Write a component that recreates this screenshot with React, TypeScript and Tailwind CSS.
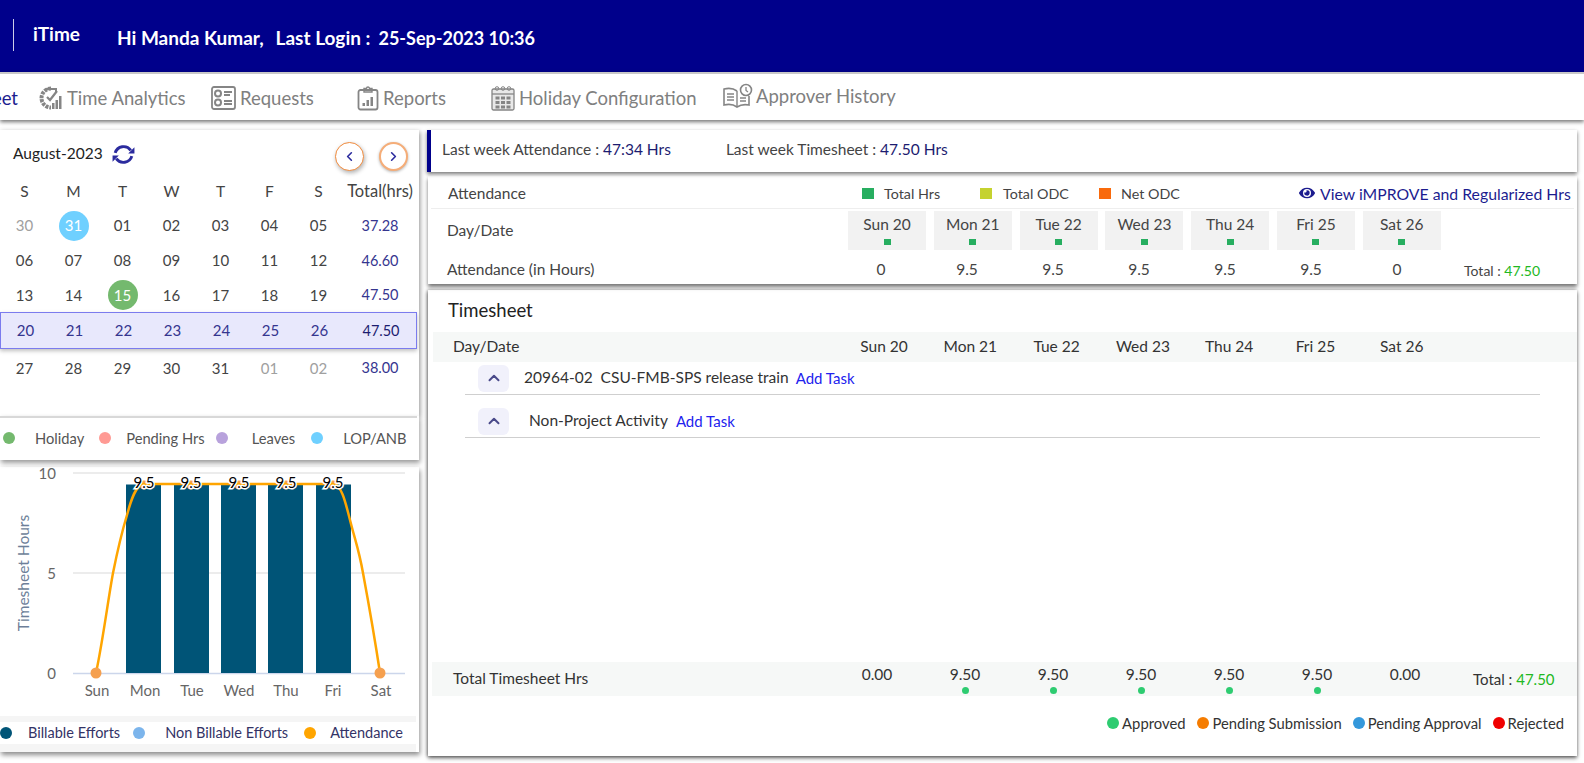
import React from "react";
import { ChevronLeft, ChevronRight, ChevronUp } from "lucide-react";
import { FaEye } from "react-icons/fa";

const days = ["Sun 20", "Mon 21", "Tue 22", "Wed 23", "Thu 24", "Fri 25", "Sat 26"];
const hours = ["0", "9.5", "9.5", "9.5", "9.5", "9.5", "0"];
const totals = ["0.00", "9.50", "9.50", "9.50", "9.50", "9.50", "0.00"];

type Cell = { t: string; muted?: boolean; bg?: string };
const weeks: { cells: Cell[]; total: string; h: string }[] = [
  {
    cells: [
      { t: "30", muted: true },
      { t: "31", bg: "bg-[#6fd0ff]" },
      { t: "01" },
      { t: "02" },
      { t: "03" },
      { t: "04" },
      { t: "05" },
    ],
    total: "37.28",
    h: "h-[35px]",
  },
  {
    cells: ["06", "07", "08", "09", "10", "11", "12"].map((t) => ({ t })),
    total: "46.60",
    h: "h-[35px]",
  },
  {
    cells: [
      { t: "13" },
      { t: "14" },
      { t: "15", bg: "bg-[#74b96e]" },
      { t: "16" },
      { t: "17" },
      { t: "18" },
      { t: "19" },
    ],
    total: "47.50",
    h: "h-[34px]",
  },
];

const calCols = "grid grid-cols-[repeat(7,49px)_74px] items-center text-center";

function NavIcon({ kind }: { kind: string }) {
  const c = "#858585";
  if (kind === "analytics")
    return (
      <svg width="24" height="26" viewBox="0 0 24 26" fill="none">
        <path d="M12 3.500a9.500 9.500 0 1 0 0 19" stroke={c} strokeWidth="4" strokeDasharray="3 1" />
        <path d="M7 4h10v4" stroke={c} strokeWidth="2" />
        <path d="M8 12l3 3 7-9" stroke={c} strokeWidth="2.200" />
        <path d="M13 24v-6h2.500v6zM16.500 24v-9H19v9zM20 24V11h2.500v13z" fill={c} />
      </svg>
    );
  if (kind === "requests")
    return (
      <svg width="25" height="24" viewBox="0 0 25 24" fill="none" stroke={c}>
        <rect x="1" y="1" width="23" height="22" rx="2" strokeWidth="1.800" />
        <circle cx="7" cy="7.500" r="3" strokeWidth="2" />
        <circle cx="7" cy="16.500" r="3" strokeWidth="2" />
        <path d="M13 6h8M13 9h6M13 15h8M13 18h8" strokeWidth="2" />
      </svg>
    );
  if (kind === "reports")
    return (
      <svg width="22" height="26" viewBox="0 0 22 26" fill="none" stroke={c}>
        <rect x="1.500" y="5" width="19" height="19.500" rx="2" strokeWidth="1.800" />
        <path d="M7 5V3.500h2.500a1.500 1.500 0 0 1 3 0H15V7H7z" strokeWidth="1.400" />
        <path d="M5.500 21v-3h2.500v3zM9.500 21v-6H12v6zM13.500 21v-9H16v9z" fill={c} stroke="none" />
      </svg>
    );
  if (kind === "holiday")
    return (
      <svg width="24" height="26" viewBox="0 0 24 26" fill="none" stroke={c}>
        <rect x="1" y="4" width="22" height="21" rx="1.500" fill="#e8e8e8" strokeWidth="1.300" />
        <path d="M1 9h22" strokeWidth="1.300" />
        <circle cx="6" cy="3.500" r="1.800" strokeWidth="1" />
        <circle cx="12" cy="3.500" r="1.800" strokeWidth="1" />
        <circle cx="18" cy="3.500" r="1.800" strokeWidth="1" />
        <path
          d="M4.500 11.500h4v3h-4zM10 11.500h4v3h-4zM15.500 11.500h4v3h-4zM4.500 16h4v3h-4zM10 16h4v3h-4zM15.500 16h4v3h-4zM4.500 20.500h4v3h-4zM10 20.500h4v3h-4zM15.500 20.500h4v3h-4z"
          fill={c}
          stroke="none"
        />
      </svg>
    );
  return (
    <svg width="32" height="26" viewBox="0 0 32 26" fill="none" stroke={c}>
      <path d="M15 8C11 5 6 5 2 6v16c4-1 9-1 13 2 3-2 7-3 12-2V13" strokeWidth="1.600" />
      <path d="M15 8v16" strokeWidth="1.400" />
      <path d="M5 11h7M5 14h7M5 17h7M18 15h6M18 18h6" strokeWidth="1.600" />
      <circle cx="24" cy="7" r="5.500" fill="#fff" strokeWidth="1.600" />
      <path d="M24 4v3.500l2 1.500" strokeWidth="1.300" />
    </svg>
  );
}

function NavItem({ icon, label, cls, gap = "gap-[4px]" }: { icon: string; label: string; cls: string; gap?: string }) {
  return (
    <div className={`flex items-center ${gap} text-[18.500px] text-[#808080] ${cls}`}>
      <NavIcon kind={icon} />
      <span className="translate-y-[1px] whitespace-nowrap">{label}</span>
    </div>
  );
}

function Dot({ cls }: { cls: string }) {
  return <span className={`inline-block h-[12px] w-[12px] shrink-0 rounded-full ${cls}`} />;
}

function RefreshIcon() {
  return (
    <svg width="25" height="25" viewBox="0 0 24 24" fill="none" stroke="#2b2b9e" strokeWidth="2.800">
      <path d="M4 10.500A8.500 8.500 0 0 1 19 8" />
      <path d="M20 13.500A8.500 8.500 0 0 1 5 16" />
      <path d="M21.500 5v6h-6z" fill="#2b2b9e" stroke="none" transform="translate(1 0)" />
      <path d="M2.500 19v-6h6z" fill="#2b2b9e" stroke="none" transform="translate(-1 0)" />
    </svg>
  );
}

function Chart() {
  const bars = [126, 174, 221, 268, 316];
  const labels = [
    ["Sun", 97],
    ["Mon", 145],
    ["Tue", 192],
    ["Wed", 239],
    ["Thu", 286],
    ["Fri", 333],
    ["Sat", 381],
  ] as const;
  const pts = [144, 191, 239, 286, 333];
  return (
    <svg width="419" height="249" viewBox="0 467 419 249" className="block overflow-visible">
      <line x1="73" x2="405" y1="473" y2="473" stroke="#e6e6e6" strokeWidth="1.500" />
      <line x1="73" x2="405" y1="573" y2="573" stroke="#e6e6e6" strokeWidth="1.500" />
      <line x1="73" x2="405" y1="673.500" y2="673.500" stroke="#ccd6eb" strokeWidth="1.500" />
      {bars.map((x) => (
        <rect key={x} x={x} y="484.500" width="35" height="188.500" fill="#005477" />
      ))}
      {pts.map((x) => (
        <circle key={x} cx={x} cy="485" r="4.500" fill="#f5a04f" />
      ))}
      <path
        d="M96 673C103 640 108 600 113 573C118 548 121 535 127 515C131 500 136 484 144 484L333 484C341 484 345 500 350 520C355 540 359 550 363 573C368 600 375 640 380 673"
        fill="none"
        stroke="#ffa500"
        strokeWidth="2.500"
      />
      <circle cx="96" cy="673" r="5.500" fill="#f5a04f" />
      <circle cx="380" cy="673" r="5.500" fill="#f5a04f" />
      {pts.map((x) => (
        <text
          key={x}
          x={x}
          y="488"
          textAnchor="middle"
          fontSize="15"
          fill="#000"
          stroke="#fff"
          strokeWidth="3"
          paintOrder="stroke"
          fontFamily="Lato, sans-serif"
        >
          9.5
        </text>
      ))}
      {[
        ["10", 479],
        ["5", 579],
        ["0", 679],
      ].map(([t, y]) => (
        <text key={t} x="56" y={y} textAnchor="end" fontSize="15" fill="#666" fontFamily="Lato, sans-serif">
          {t}
        </text>
      ))}
      {labels.map(([t, x]) => (
        <text key={t} x={x} y="696" textAnchor="middle" fontSize="15" fill="#666" fontFamily="Lato, sans-serif">
          {t}
        </text>
      ))}
      <text
        x="0"
        y="0"
        transform="translate(29 573) rotate(-90)"
        textAnchor="middle"
        fontSize="15.500"
        fill="#6d7f99"
        fontFamily="Lato, sans-serif"
      >
        Timesheet Hours
      </text>
    </svg>
  );
}

function LeftColumn() {
  return (
    <div className="flex w-[419px] shrink-0 flex-col">
      <div className="h-[286px] bg-white shadow-[1px_2px_5px_rgba(0,0,0,0.45)]">
        <div className="flex h-[46px] items-center pt-[6px]">
          <span className="ml-[13px] -translate-y-[2px] text-[15.500px] text-[#222]">August-2023</span>
          <span className="ml-[8px] -translate-y-[2px]">
            <RefreshIcon />
          </span>
          <button className="ml-[199px] flex h-[29px] w-[29px] items-center justify-center rounded-full border border-[#f08a3c] bg-white shadow-[1px_2px_4px_rgba(0,0,0,0.3)]">
            <ChevronLeft size={15} strokeWidth={2.600} color="#2b2b9e" />
          </button>
          <button className="ml-[15px] flex h-[29px] w-[29px] items-center justify-center rounded-full border-2 border-[#f5ad78] bg-white shadow-[0_1px_3px_rgba(0,0,0,0.3)]">
            <ChevronRight size={15} strokeWidth={2.600} color="#2b2b9e" />
          </button>
        </div>
        <div className={`${calCols} -mt-[1px] h-[33px] text-[15.500px] text-[#444]`}>
          {["S", "M", "T", "W", "T", "F", "S"].map((d, i) => (
            <span key={i}>{d}</span>
          ))}
          <span className="whitespace-nowrap text-[16.500px]">Total(hrs)</span>
        </div>
        {weeks.map((w) => (
          <div key={w.total + w.cells[0].t} className={`${calCols} ${w.h} text-[15px] text-[#444]`}>
            {w.cells.map((c) => (
              <span key={c.t} className="flex justify-center">
                <span
                  className={`flex h-[30px] w-[30px] items-center justify-center rounded-full ${
                    c.bg ? `${c.bg} text-white` : c.muted ? "text-[#a0a0a0]" : ""
                  }`}
                >
                  {c.t}
                </span>
              </span>
            ))}
            <span className="text-[14.500px] text-[#35358f]">{w.total}</span>
          </div>
        ))}
        <div
          className={`${calCols} h-[37px] w-[417px] border border-[#7b7bee] bg-[#e8e8fc] text-[15px] text-[#35358f] shadow-[0_2px_4px_rgba(0,0,0,0.25)]`}
        >
          {["20", "21", "22", "23", "24", "25", "26"].map((t) => (
            <span key={t}>{t}</span>
          ))}
          <span className="text-[14.500px] text-[#1c1c70]">47.50</span>
        </div>
        <div className={`${calCols} h-[38px] text-[15px] text-[#444]`}>
          {["27", "28", "29", "30", "31"].map((t) => (
            <span key={t}>{t}</span>
          ))}
          <span className="text-[#a0a0a0]">01</span>
          <span className="text-[#a0a0a0]">02</span>
          <span className="text-[14.500px] text-[#35358f]">38.00</span>
        </div>
      </div>

      <div className="relative flex h-[44px] items-center bg-white text-[14.700px] text-[#555] shadow-[1px_3px_5px_rgba(0,0,0,0.4)] before:absolute before:left-0 before:top-0 before:h-[2px] before:w-[417px] before:bg-[#d8d8d8]">
        <Dot cls="ml-[3px] bg-[#74b96e]" />
        <span className="ml-[20px]">Holiday</span>
        <Dot cls="ml-[15px] bg-[#ff9a94]" />
        <span className="ml-[15px]">Pending Hrs</span>
        <Dot cls="ml-[11px] bg-[#b8a2dc]" />
        <span className="ml-[24px]">Leaves</span>
        <Dot cls="ml-[16px] bg-[#6fd0ff]" />
        <span className="ml-[20px]">LOP/ANB</span>
      </div>

      <div className="mt-[7px] h-[285px] bg-white shadow-[1px_3px_5px_rgba(0,0,0,0.45)]">
        <Chart />
        <div className="h-[36px] w-[416px] bg-[#f5f5f5] py-[6px]">
          <div className="flex h-[22px] items-center bg-white text-[14.500px] text-[#333366]">
            <Dot cls="bg-[#005477]" />
            <span className="ml-[16px] whitespace-nowrap">Billable Efforts</span>
            <Dot cls="ml-[13px] bg-[#7cb5ec]" />
            <span className="ml-[20px] whitespace-nowrap">Non Billable Efforts</span>
            <Dot cls="ml-[16px] bg-[#ffa500]" />
            <span className="ml-[14px]">Attendance</span>
          </div>
        </div>
      </div>
    </div>
  );
}

function RightColumn() {
  return (
    <div className="ml-[8px] flex w-[1150px] shrink-0 flex-col">
      <div className="relative z-[3] flex h-[42px] items-center border-l-[4px] border-[#00008b] bg-white pl-[11px] text-[15.500px] text-[#444] shadow-[0_2px_4px_rgba(0,0,0,0.55)]">
        <span className="-translate-y-[1px]">
          Last week Attendance : <span className="text-[#1c1c70]">47:34 Hrs</span>
        </span>
        <span className="ml-[55px] -translate-y-[1px]">
          Last week Timesheet : <span className="text-[#1c1c70]">47.50 Hrs</span>
        </span>
      </div>

      <div className="relative z-[2] ml-[1px] mt-[4px] h-[108px] bg-white text-[15.500px] text-[#444] shadow-[0_3px_4px_rgba(0,0,0,0.55)]">
        <div className="mx-[3px] flex h-[33px] items-center border-b border-[#eeeeee] pl-[17px] pt-[3px]">
          <span className="w-[414px]">Attendance</span>
          <span className="h-[11px] w-[12px] bg-[#27ae60]" />
          <span className="ml-[10px] w-[96px] text-[14.300px]">Total Hrs</span>
          <span className="h-[11px] w-[12px] bg-[#c5d22f]" />
          <span className="ml-[11px] w-[96px] text-[14.300px]">Total ODC</span>
          <span className="h-[11px] w-[12px] bg-[#f96a0c]" />
          <span className="ml-[10px] w-[178px] text-[14.300px]">Net ODC</span>
          <FaEye size={16} color="#1c1c8f" className="-translate-y-[1px]" />
          <span className="ml-[5px] whitespace-nowrap text-[15.800px] text-[#1c1c8f]">
            View iMPROVE and Regularized Hrs
          </span>
        </div>
        <div className="flex h-[43px] items-center pl-[19px]">
          <span className="w-[401px]">Day/Date</span>
          <div className="grid grid-cols-[repeat(7,78px)] gap-x-[7.800px]">
            {days.map((d) => (
              <div key={d} className="flex h-[39px] flex-col items-center bg-[#f2f2f2] pt-[2px]">
                <span>{d}</span>
                <span className="mt-[3px] h-[6px] w-[7px] bg-[#27ae60]" />
              </div>
            ))}
          </div>
        </div>
        <div className="flex h-[32px] items-center pl-[19px] pt-[4px]">
          <span className="w-[414px] whitespace-nowrap">Attendance (in Hours)</span>
          <div className="grid grid-cols-[repeat(7,40px)] gap-x-[46px] text-center">
            {hours.map((h, i) => (
              <span key={i}>{h}</span>
            ))}
          </div>
          <span className="ml-[47px] whitespace-nowrap text-[14px]">
            Total : <span className="text-[#22b822]">47.50</span>
          </span>
        </div>
      </div>

      <div className="relative z-[1] ml-[1px] mt-[6px] flex h-[466px] flex-col bg-white text-[15.500px] text-[#333] shadow-[0_2px_4px_rgba(0,0,0,0.6),-1px_0_3px_rgba(0,0,0,0.3)]">
        <div className="flex h-[42px] items-center pl-[20px] text-[18.500px] text-[#222]">Timesheet</div>
        <div className="ml-[5px] flex h-[30px] items-center bg-[#f6f8f7] pl-[20px]">
          <span className="w-[392px]">Day/Date</span>
          <div className="grid grid-cols-[repeat(7,78px)] gap-x-[8.300px] text-center">
            {days.map((d) => (
              <span key={d}>{d}</span>
            ))}
          </div>
        </div>
        <div className="ml-[37px] mt-[3px] flex h-[30px] w-[1075px] items-center border-b border-[#cfcfcf] pb-[3px]">
          <span className="ml-[13px] flex h-[27px] w-[31px] items-center justify-center rounded-md bg-[#f1f1fb]">
            <ChevronUp size={18} strokeWidth={2.600} color="#4a4a8a" />
          </span>
          <span className="ml-[15px] whitespace-nowrap">20964-02&nbsp; CSU-FMB-SPS release train</span>
          <span className="ml-[7px] text-[15px] text-[#2222ee]">Add Task</span>
        </div>
        <div className="ml-[37px] mt-[13px] flex h-[30px] w-[1075px] items-center border-b border-[#cfcfcf] pb-[3px]">
          <span className="ml-[13px] flex h-[27px] w-[31px] items-center justify-center rounded-md bg-[#f1f1fb]">
            <ChevronUp size={18} strokeWidth={2.600} color="#4a4a8a" />
          </span>
          <span className="ml-[20px]">Non-Project Activity</span>
          <span className="ml-[8px] text-[15px] text-[#2222ee]">Add Task</span>
        </div>

        <div className="ml-[4px] mt-[224px] flex h-[34px] items-center bg-[#f6f8f7] pl-[21px]">
          <span className="w-[404px]">Total Timesheet Hrs</span>
          <div className="grid grid-cols-[repeat(7,40px)] gap-x-[48px] text-center">
            {totals.map((t, i) => (
              <div key={i} className="flex h-[34px] flex-col items-center pt-[1px]">
                <span>{t}</span>
                {t !== "0.00" && <span className="mt-[1px] h-[7px] w-[7px] rounded-full bg-[#2ecc71]" />}
              </div>
            ))}
          </div>
          <span className="ml-[48px] whitespace-nowrap text-[15px]">
            Total : <span className="text-[#22b822]">47.50</span>
          </span>
        </div>
        <div className="mr-[13px] mt-[16px] flex items-center justify-end text-[14.800px]">
          <Dot cls="bg-[#2ecc71]" />
          <span className="ml-[3px]">Approved</span>
          <Dot cls="ml-[12px] bg-[#f57c00]" />
          <span className="ml-[3px]">Pending Submission</span>
          <Dot cls="ml-[11px] bg-[#3498db]" />
          <span className="ml-[3px]">Pending Approval</span>
          <Dot cls="ml-[11px] bg-[#f00000]" />
          <span className="ml-[3px]">Rejected</span>
        </div>
      </div>
    </div>
  );
}

export default function App() {
  return (
    <div className="h-[763px] w-[1584px] overflow-hidden bg-white font-['Lato',sans-serif]">
      <header className="flex h-[72px] items-center bg-[#00008b] text-white">
        <span className="ml-[13px] h-[32px] w-px -translate-y-[1px] bg-white/80" />
        <span className="ml-[19px] -translate-y-[2px] text-[19px] font-bold">iTime</span>
        <span className="ml-[37px] translate-y-[2px] text-[19px] font-bold">Hi Manda Kumar,</span>
        <span className="ml-[12px] translate-y-[2px] text-[19px] font-bold">Last Login :</span>
        <span className="ml-[8px] translate-y-[2px] text-[18px] font-bold">25-Sep-2023 10:36</span>
      </header>
      <nav className="relative z-10 flex h-[48px] items-center border-t-2 border-[#c8c8c8] bg-white pt-[1px] shadow-[0_2px_4px_rgba(0,0,0,0.55)]">
        <span className="-ml-[92px] w-[110px] shrink-0 translate-y-[1px] text-right text-[18.500px] text-[#1c1c8f]">
          Timesheet
        </span>
        <NavItem icon="analytics" label="Time Analytics" cls="ml-[21px] w-[172px] shrink-0" />
        <NavItem icon="requests" label="Requests" cls="w-[146px] shrink-0" />
        <NavItem icon="reports" label="Reports" cls="w-[134px] shrink-0" />
        <NavItem icon="holiday" label="Holiday Configuration" cls="w-[231px] shrink-0" />
        <NavItem icon="approver" label="Approver History" gap="gap-[2px]" cls="-translate-y-[2px]" />
      </nav>
      <main className="mt-[10px] flex">
        <LeftColumn />
        <RightColumn />
      </main>
    </div>
  );
}
